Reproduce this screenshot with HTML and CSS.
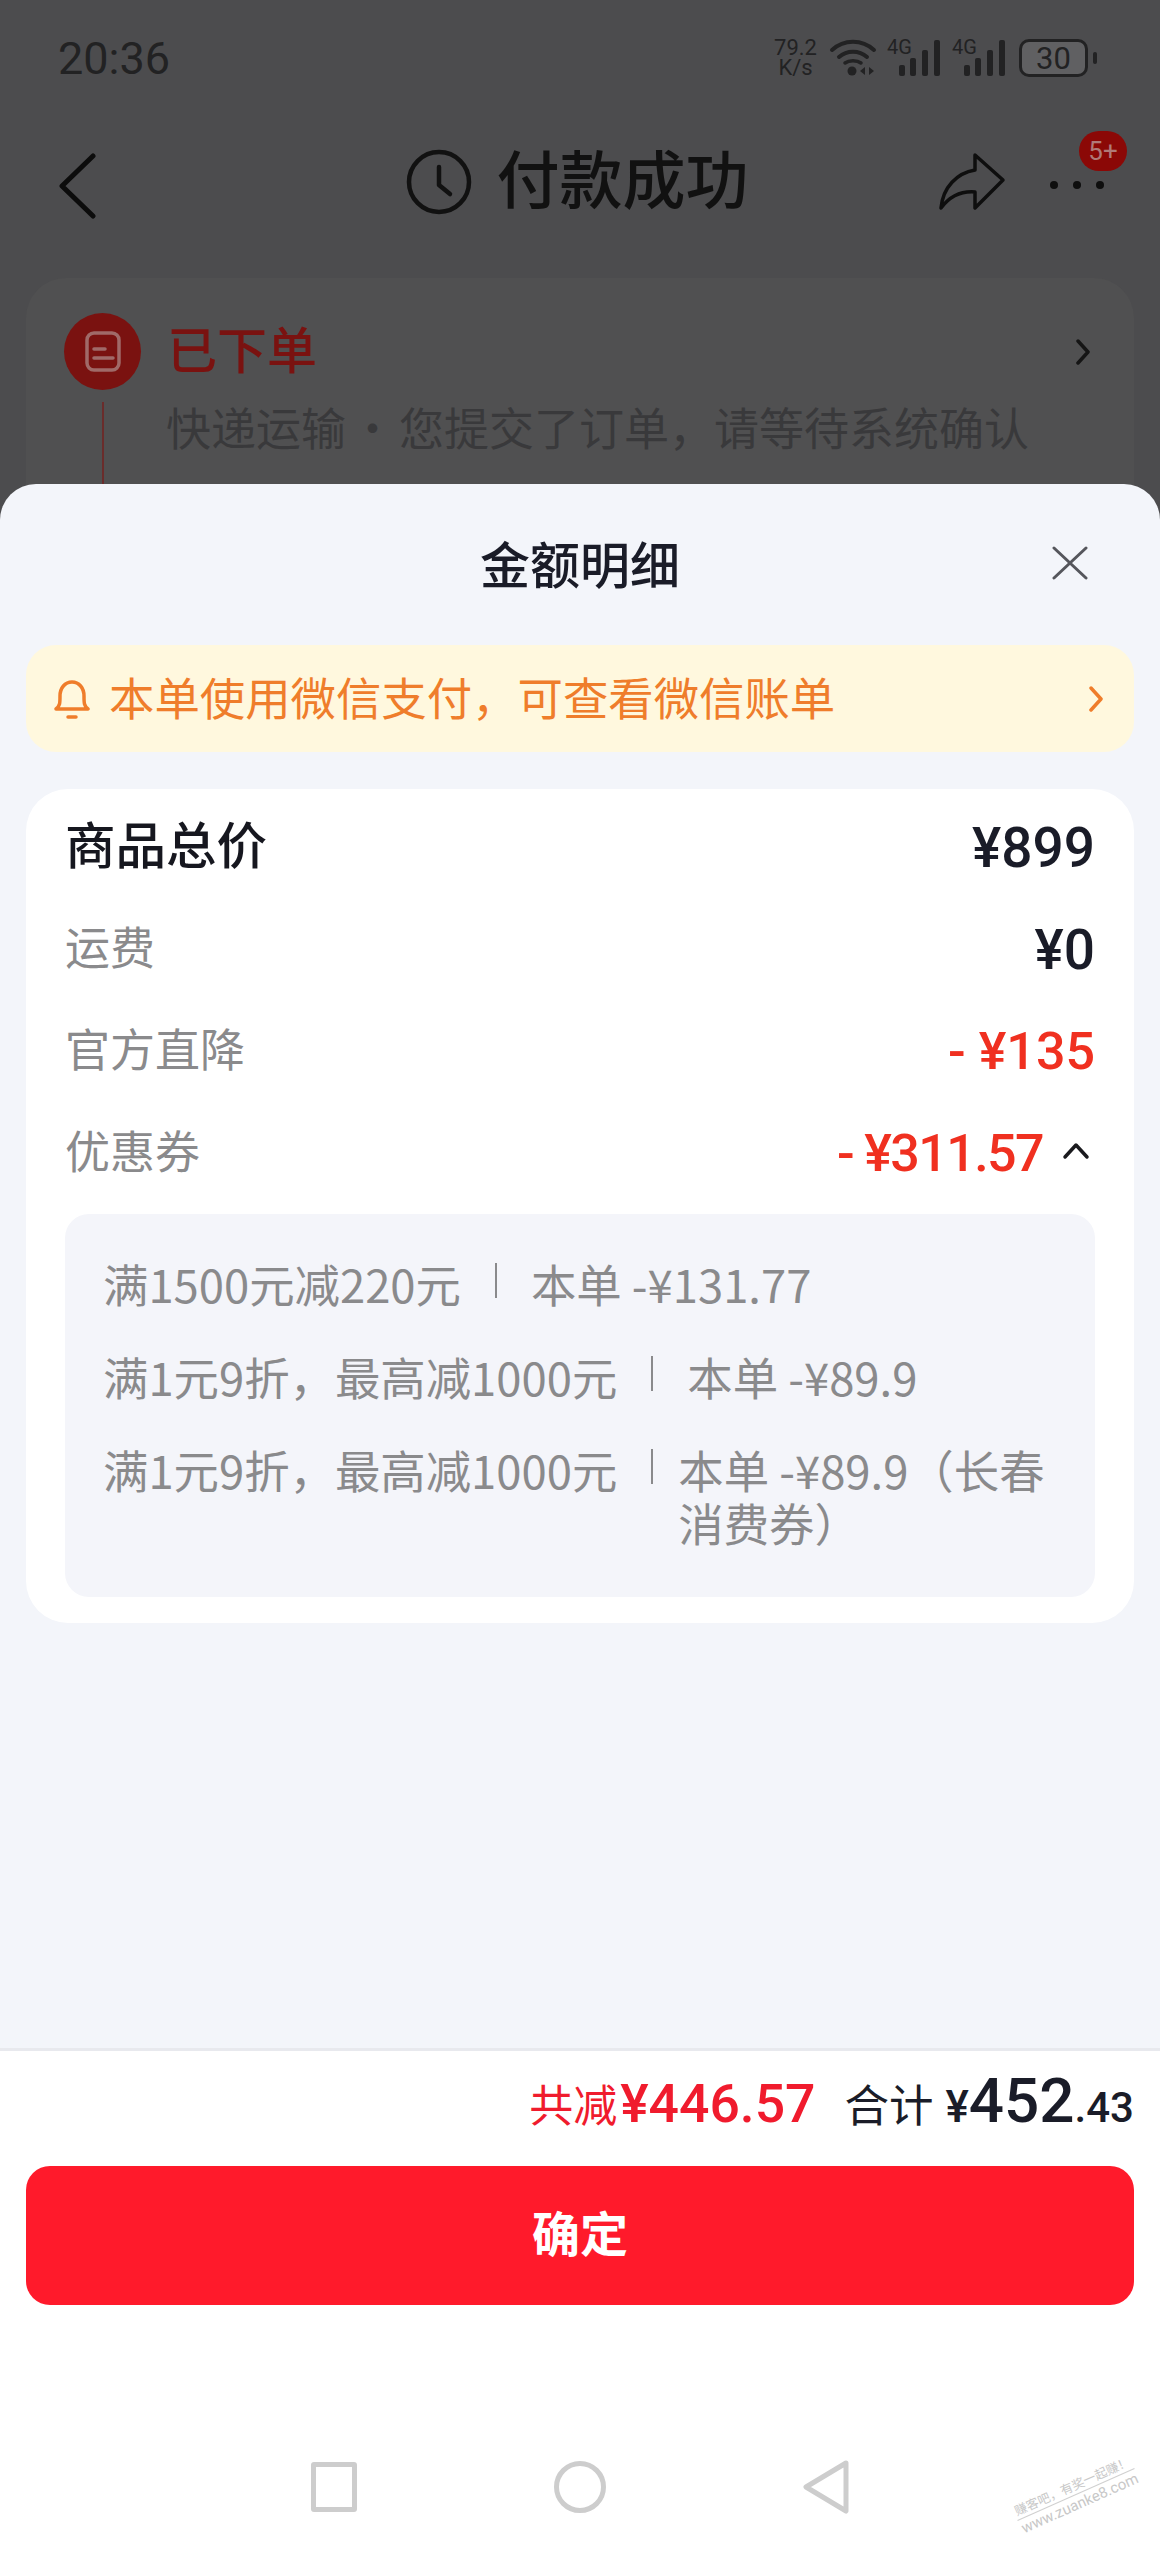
FILE: index.html
```html
<!DOCTYPE html>
<html lang="zh-CN">
<head>
    <meta charset="UTF-8">
    <meta name="viewport" content="width=device-width, initial-scale=1.0">
    <title>金额明细</title>
    <link rel="stylesheet" href="styles.css">
</head>
<body>
    <div class="behind">
        <div class="status-bar">
            <span class="clock-time">20:36</span>
            <div class="status-icons">
                <div class="speed"><span>79.2</span><span>K/s</span></div>
                <svg class="wifi" width="48" height="38" viewBox="0 0 48 38" fill="none" stroke="#222223" stroke-linecap="round">
                    <path d="M3 11 C15 0 33 0 45 11" stroke-width="4"/>
                    <path d="M10 18 C18 11 30 11 38 18" stroke-width="4"/>
                    <path d="M16 24 C20 21 28 21 32 24" stroke-width="3.5"/>
                    <circle cx="23" cy="32" r="4.5" fill="#222223" stroke="none"/>
                    <path d="M36 28 L31 32 L36 36 Z M40 28 L45 32 L40 36 Z" fill="#222223" stroke="none"/>
                </svg>
                <div class="signal">
                    <span class="signal-label">4G</span>
                    <svg width="42" height="36" viewBox="0 0 42 36" fill="#222223">
                        <rect x="0" y="25" width="6" height="11" rx="2"/>
                        <rect x="11" y="18" width="6" height="18" rx="2"/>
                        <rect x="23" y="10" width="6" height="26" rx="2"/>
                        <rect x="35" y="0" width="6" height="36" rx="2"/>
                    </svg>
                </div>
                <div class="signal">
                    <span class="signal-label">4G</span>
                    <svg width="42" height="36" viewBox="0 0 42 36" fill="#222223">
                        <rect x="0" y="25" width="6" height="11" rx="2"/>
                        <rect x="11" y="18" width="6" height="18" rx="2"/>
                        <rect x="23" y="10" width="6" height="26" rx="2"/>
                        <rect x="35" y="0" width="6" height="36" rx="2"/>
                    </svg>
                </div>
                <div class="battery"><span>30</span></div>
                <div class="battery-nub"></div>
            </div>
        </div>

        <div class="nav-bar">
            <svg class="back" width="40" height="66" viewBox="0 0 40 66" fill="none" stroke="#0c0c0c" stroke-width="5" stroke-linecap="round" stroke-linejoin="round">
                <path d="M35 3 L4 33 L35 63"/>
            </svg>
            <div class="nav-title">
                <svg width="66" height="66" viewBox="0 0 66 66" fill="none" stroke="#111" stroke-width="4.5" stroke-linecap="round" stroke-linejoin="round">
                    <circle cx="33" cy="33" r="30"/>
                    <path d="M33 18 L33 36 L44 45"/>
                </svg>
                <span>付款成功</span>
            </div>
            <div class="nav-actions">
                <svg width="70" height="62" viewBox="0 0 70 62" fill="none" stroke="#0e0e0e" stroke-width="3.5" stroke-linejoin="round">
                    <path d="M3 57 C5 36 19 22 37 19 L37 4 L65 29 L37 57 L37 41 C24 40 12 45 3 57 Z"/>
                </svg>
                <div class="more">
                    <i></i><i></i><i></i>
                    <span class="badge">5+</span>
                </div>
            </div>
        </div>

        <div class="order-card">
            <div class="order-row">
                <div class="order-icon">
                    <svg width="36" height="42" viewBox="0 0 36 42" fill="none" stroke="#a06a68" stroke-width="3.5" stroke-linecap="round">
                        <rect x="2" y="2" width="32" height="37" rx="7"/>
                        <path d="M9 18 H20 M9 27 H28"/>
                    </svg>
                </div>
                <span class="order-title">已下单</span>
                <svg class="order-arrow" width="14" height="26" viewBox="0 0 14 26" fill="none" stroke="#151515" stroke-width="3.5" stroke-linecap="round" stroke-linejoin="round">
                    <path d="M2 2 L12 13 L2 24"/>
                </svg>
            </div>
            <div class="order-sub">
                <div class="line-col"><div class="line"></div></div>
                <span class="order-desc">快递运输<span class="dot">·</span>您提交了订单，请等待系统确认</span>
            </div>
        </div>
    </div>

    <div class="sheet">
        <div class="sheet-head">
            <span></span>
            <h1>金额明细</h1>
            <svg class="close" width="36" height="34" viewBox="0 0 36 34" fill="none" stroke="#55565c" stroke-width="3" stroke-linecap="round">
                <path d="M2 2 L34 32 M34 2 L2 32"/>
            </svg>
        </div>

        <div class="notice">
            <svg width="36" height="40" viewBox="0 0 36 40" fill="none" stroke="#ef7d2b" stroke-width="3.5" stroke-linecap="round" stroke-linejoin="round">
                <path d="M2 30 C6 27 6 24 6 17 C6 9 11 3 18 3 C25 3 30 9 30 17 C30 24 30 27 34 30 Z"/>
                <path d="M14 38 H22"/>
            </svg>
            <span class="notice-text">本单使用微信支付，可查看微信账单</span>
            <svg width="14" height="26" viewBox="0 0 14 26" fill="none" stroke="#ef7d2b" stroke-width="3.5" stroke-linecap="round" stroke-linejoin="round">
                <path d="M2 2 L12 13 L2 24"/>
            </svg>
        </div>

        <div class="detail-card">
            <div class="row row-main">
                <span class="row-label">商品总价</span>
                <span class="amount amount-wide">¥899</span>
            </div>
            <div class="row">
                <span class="row-label">运费</span>
                <span class="amount amount-wide">¥0</span>
            </div>
            <div class="row">
                <span class="row-label">官方直降</span>
                <span class="amount red">- ¥135</span>
            </div>
            <div class="row">
                <span class="row-label">优惠券</span>
                <div class="amount-group">
                    <span class="amount red amount-tight">- ¥311.57</span>
                    <svg width="28" height="18" viewBox="0 0 28 18" fill="none" stroke="#1a1a1e" stroke-width="3.5" stroke-linecap="round" stroke-linejoin="round">
                        <path d="M3 15 L14 3 L25 15"/>
                    </svg>
                </div>
            </div>

            <div class="coupons">
                <div class="coupon">
                    <span>满1500元减220元</span>
                    <i class="sep"></i>
                    <span>本单 -¥131.77</span>
                </div>
                <div class="coupon">
                    <span>满1元9折，最高减1000元</span>
                    <i class="sep"></i>
                    <span>本单 -¥89.9</span>
                </div>
                <div class="coupon coupon-long">
                    <span>满1元9折，最高减1000元</span>
                    <i class="sep"></i>
                    <span>本单 -¥89.9（长春消费券）</span>
                </div>
            </div>
        </div>

        <div class="spacer"></div>

        <div class="footer">
            <div class="total-row">
                <span class="saved">共减<b>¥446.57</b></span>
                <span class="total">合计</span>
                <span class="total-yen">¥</span>
                <span class="total-big">452</span>
                <span class="total-small">.43</span>
            </div>
            <button class="ok-btn">确定</button>
            <div class="sys-nav">
                <div class="sys-square"></div>
                <div class="sys-circle"></div>
                <svg width="46" height="54" viewBox="0 0 46 54" fill="none" stroke="#cdcdcd" stroke-width="5" stroke-linejoin="round">
                    <path d="M43 3 L3 27 L43 51 Z"/>
                </svg>
            </div>
            <div class="watermark">
                <div class="wm-cn">赚客吧，有奖一起赚！</div>
                <div class="wm-en">www.zuanke8.com</div>
            </div>
        </div>
    </div>
</body>
</html>
```

FILE: styles.css
```css
* {
    box-sizing: border-box;
}

body {
    margin: 0;
    width: 1160px;
    height: 2550px;
    overflow: hidden;
    background-color: #4c4c4e;
    font-family: "Noto Sans CJK SC", Roboto, sans-serif;
}

/* Pagina oscurecida detras de la hoja */
.behind {
    height: 524px;
    overflow: hidden;
}

.status-bar {
    display: flex;
    justify-content: space-between;
    align-items: center;
    height: 116px;
    padding: 0 63px 0 58px;
    color: #222223;
}

.clock-time {
    font-family: Roboto, sans-serif;
    font-size: 45px;
}

.status-icons {
    display: flex;
    align-items: center;
}

.speed {
    display: flex;
    flex-direction: column;
    align-items: center;
    margin-right: 12px;
    font-family: Roboto, sans-serif;
    font-size: 22px;
    line-height: 20px;
}

.wifi {
    margin-right: 10px;
}

.signal {
    position: relative;
    width: 54px;
    height: 36px;
    margin-right: 11px;
    display: flex;
    justify-content: flex-end;
}

.signal-label {
    position: absolute;
    left: 0;
    top: -3px;
    font-family: Roboto, sans-serif;
    font-size: 20px;
    line-height: 20px;
}

.battery {
    display: flex;
    justify-content: center;
    align-items: center;
    width: 69px;
    height: 38px;
    margin-left: 2px;
    border: 3px solid #222223;
    border-radius: 10px;
    background-color: #606062;
    font-family: Roboto, sans-serif;
    font-size: 31px;
}

.battery-nub {
    width: 4px;
    height: 12px;
    margin-left: 5px;
    border-radius: 2px;
    background-color: #222223;
}

.nav-bar {
    display: grid;
    grid-template-columns: 1fr auto 1fr;
    align-items: center;
    height: 132px;
}

.back {
    margin: 7px 0 0 58px;
}

.nav-title {
    display: flex;
    align-items: center;
    gap: 25px;
    padding-right: 6px;
    font-size: 63px;
    font-weight: 500;
    color: #111;
}

.nav-title span {
    padding-bottom: 13px;
}

.nav-actions {
    display: flex;
    justify-content: flex-end;
    align-items: center;
}

.more {
    position: relative;
    display: flex;
    gap: 15px;
    margin: 6px 56px 0 42px;
}

.more i {
    width: 8px;
    height: 8px;
    border-radius: 50%;
    background-color: #0e0e0e;
}

.badge {
    position: absolute;
    left: 29px;
    top: -50px;
    width: 48px;
    height: 40px;
    border-radius: 20px;
    background-color: #8b0806;
    color: #b07a78;
    font-family: Roboto, sans-serif;
    font-size: 26px;
    line-height: 40px;
    text-align: center;
}

.order-card {
    height: 400px;
    margin: 30px 26px 0;
    padding: 35px 38px 0;
    border-radius: 40px;
    background-color: #505051;
}

.order-row {
    display: flex;
    align-items: center;
}

.order-icon {
    display: flex;
    justify-content: center;
    align-items: center;
    width: 77px;
    height: 77px;
    border-radius: 50%;
    background-color: #7a1210;
}

.order-title {
    flex: 1;
    margin-left: 26px;
    padding-bottom: 10px;
    font-size: 50px;
    font-weight: 500;
    line-height: 60px;
    color: #7a1210;
}

.order-arrow {
    margin-right: 6px;
}

.order-sub {
    display: flex;
    margin-top: 12px;
}

.line-col {
    display: flex;
    justify-content: center;
    width: 77px;
}

.line {
    width: 2px;
    height: 120px;
    background-color: #6a2c2b;
}

.order-desc {
    margin-left: 25px;
    font-size: 45px;
    line-height: 50px;
    color: #39393b;
}

.dot {
    padding: 0 4px;
}

/* Hoja inferior */
.sheet {
    position: relative;
    display: flex;
    flex-direction: column;
    height: 2066px;
    margin-top: -40px;
    border-radius: 36px 36px 0 0;
    background-color: #f3f5fa;
    overflow: hidden;
}

.sheet-head {
    display: grid;
    grid-template-columns: 1fr auto 1fr;
    align-items: center;
    height: 161px;
    padding-bottom: 3px;
}

.sheet-head h1 {
    margin: 0;
    padding-bottom: 3px;
    font-size: 50px;
    font-weight: 500;
    color: #1a1c28;
}

.close {
    justify-self: end;
    margin-right: 72px;
}

.notice {
    display: flex;
    align-items: center;
    height: 107px;
    margin: 0 26px;
    padding: 0 31px 0 28px;
    border-radius: 30px;
    background-color: #fff8de;
}

.notice-text {
    flex: 1;
    margin-left: 19px;
    padding-bottom: 6px;
    font-size: 45.4px;
    color: #ef7d2b;
}

.detail-card {
    margin: 37px 26px 0;
    padding: 5px 39px 26px;
    border-radius: 42px;
    background-color: white;
}

.row {
    display: flex;
    justify-content: space-between;
    align-items: center;
    height: 102px;
}

.row-label {
    padding-bottom: 4px;
    font-size: 45px;
    color: #8a8a8c;
}

.row-main .row-label {
    padding-bottom: 7px;
    font-size: 50.5px;
    font-weight: 500;
    color: #16171f;
}

.amount {
    padding-top: 5px;
    font-family: Roboto, sans-serif;
    font-size: 52px;
    font-weight: 500;
    color: #1a1c28;
    white-space: pre;
}

.amount-wide {
    font-size: 55px;
}

.amount-tight {
    letter-spacing: -1.6px;
}

.amount.red {
    color: #f03020;
}

.amount-group {
    display: flex;
    align-items: center;
    gap: 19px;
    margin-right: 5px;
}

.coupons {
    margin-top: 12px;
    padding: 43px 30px 48px 38px;
    border-radius: 24px;
    background-color: #f4f5fa;
}

.coupon {
    display: flex;
    margin-bottom: 40px;
    font-size: 45.4px;
    line-height: 53px;
    color: #8a8a8c;
}

.coupon:last-child {
    margin-bottom: 0;
}

.coupon span:first-child {
    flex-shrink: 0;
}

.sep {
    flex-shrink: 0;
    width: 2px;
    height: 35px;
    margin: 6px 34px 0;
    background-color: #8a8a8c;
}

.coupon-long .sep {
    margin-right: 25px;
}

.spacer {
    flex: 1;
}

.footer {
    position: relative;
    height: 502px;
    padding: 0 26px;
    border-top: 3px solid #e8e9ee;
    background-color: white;
}

.total-row {
    display: flex;
    justify-content: flex-end;
    align-items: baseline;
    height: 115px;
    padding-top: 13px;
    color: #1a1c28;
}

.saved {
    font-size: 44px;
    color: #f01b2d;
}

.saved b {
    margin-left: 3px;
    font-family: Roboto, sans-serif;
    font-size: 53.5px;
    font-weight: 500;
}

.total {
    margin-left: 29px;
    font-size: 44.5px;
}

.total-yen {
    margin-left: 12px;
    font-family: Roboto, sans-serif;
    font-size: 44px;
    font-weight: 500;
}

.total-big {
    font-family: Roboto, sans-serif;
    font-size: 62px;
    font-weight: 500;
}

.total-small {
    font-family: Roboto, sans-serif;
    font-size: 42px;
    font-weight: 500;
}

.ok-btn {
    display: block;
    width: 100%;
    height: 139px;
    padding-bottom: 10px;
    border: none;
    border-radius: 24px;
    background-color: #ff1a2b;
    color: white;
    font-family: inherit;
    font-size: 48px;
    font-weight: 700;
}

.sys-nav {
    display: flex;
    justify-content: center;
    align-items: center;
    gap: 197px;
    margin-top: 155px;
}

.sys-square {
    width: 46px;
    height: 50px;
    border: 5px solid #cdcdcd;
    border-radius: 3px;
}

.sys-circle {
    width: 52px;
    height: 52px;
    border: 5px solid #cdcdcd;
    border-radius: 50%;
}

/* Marca de agua sobre la esquina */
.watermark {
    position: absolute;
    left: 1012px;
    top: 424px;
    width: 128px;
    transform: rotate(-24deg);
    color: #c8c8c8;
    text-align: center;
}

.wm-cn {
    border-bottom: 1px solid #d0d0d0;
    font-size: 12.5px;
    line-height: 19px;
}

.wm-en {
    font-family: Roboto, sans-serif;
    font-size: 15px;
    line-height: 19px;
}
```
